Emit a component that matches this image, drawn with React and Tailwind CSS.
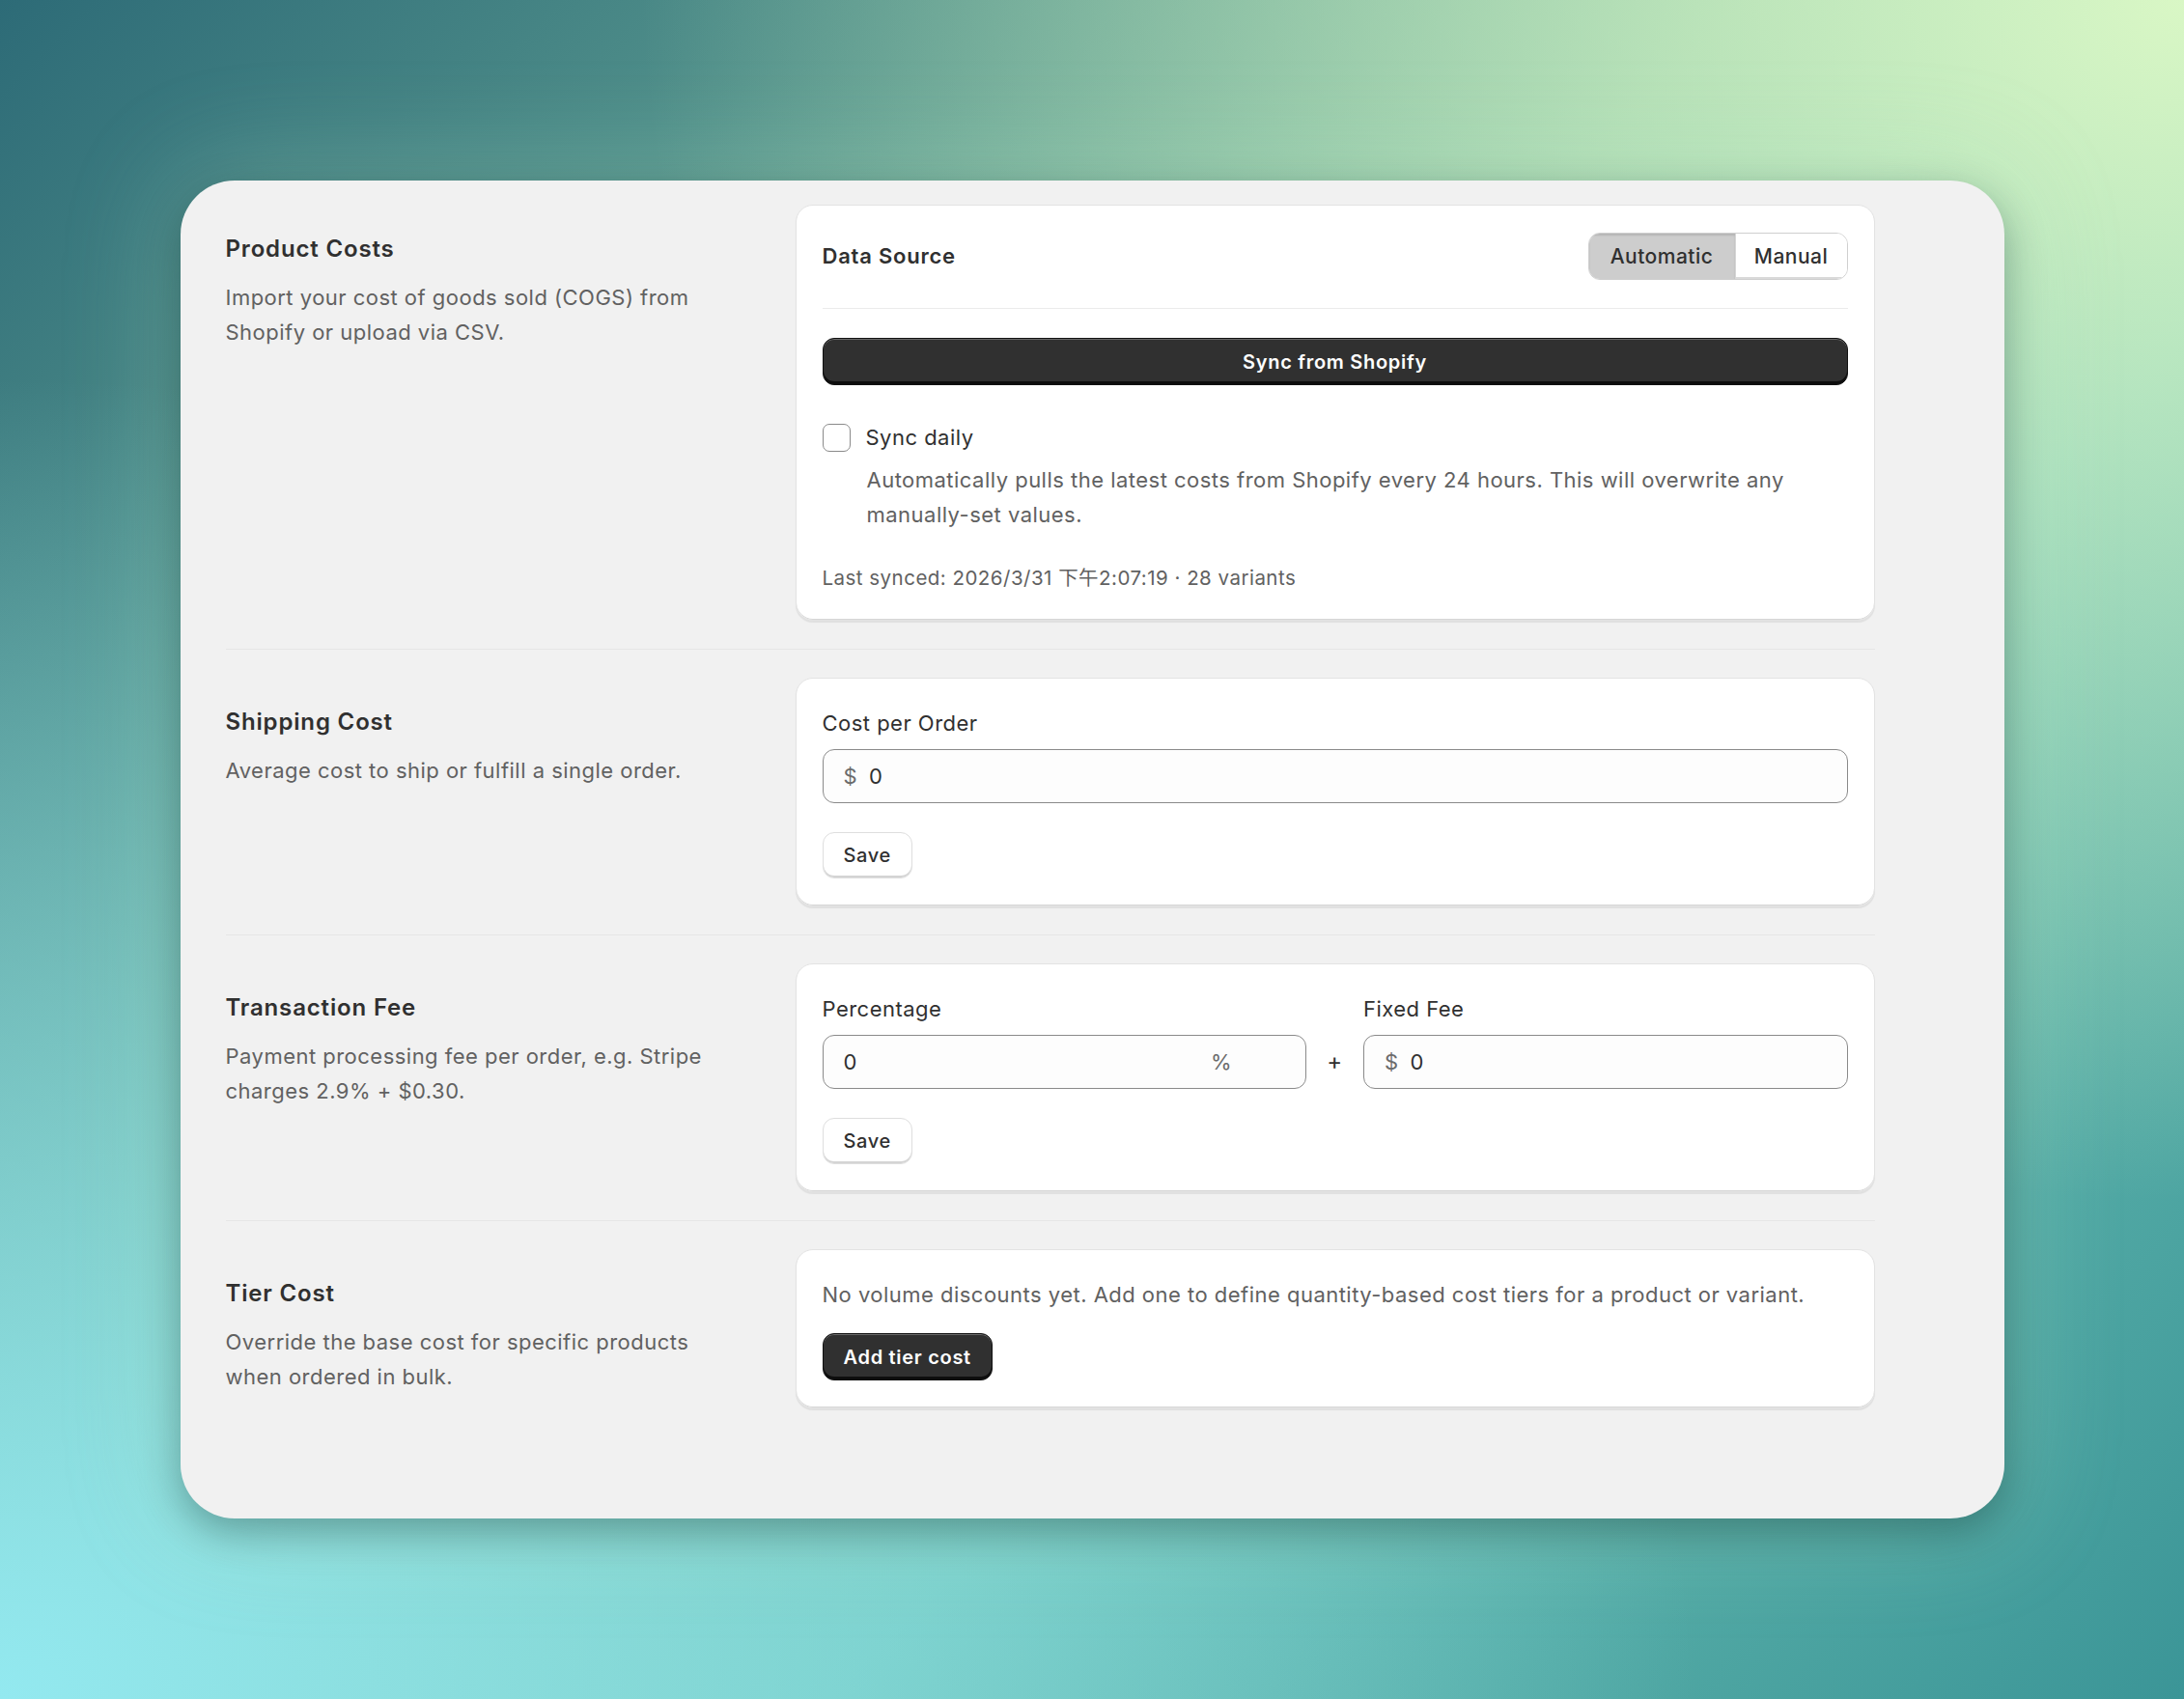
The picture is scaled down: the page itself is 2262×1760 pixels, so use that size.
import React from 'react';

function SectionText({ title, children }) {
  return (
    <div className="w-[590px] shrink-0 pt-[30px]">
      <h2 className="text-[24px] leading-[32px] font-semibold tracking-[0.035em] text-[#303030]">{title}</h2>
      <p className="mt-[16px] max-w-[530px] text-[22px] leading-[36px] text-[#616161]">{children}</p>
    </div>
  );
}

function Card({ children }) {
  return (
    <div className="w-[1118px] rounded-[18px] border border-[#e3e3e3] bg-white px-[27px] py-[28px] shadow-[0_2px_1px_rgba(0,0,0,0.07),inset_0_-1px_0_#d6d6d6]">
      {children}
    </div>
  );
}

function SecondaryButton({ children }) {
  return (
    <button className="h-[48px] rounded-[12px] border border-[#dedede] bg-white px-[21px] text-[20px] font-medium tracking-[0.03em] text-[#303030] shadow-[inset_0_-2px_0_#d4d4d4]">
      {children}
    </button>
  );
}

function PrimaryButton({ children, className = '' }) {
  return (
    <button
      className={`h-[49px] rounded-[12px] border border-[#111] bg-[#303030] px-[21px] text-[20px] font-semibold tracking-[0.035em] text-white shadow-[inset_0_1px_0_rgba(255,255,255,0.28),inset_0_-3px_0_#0d0d0d] ${className}`}
    >
      {children}
    </button>
  );
}

function MoneyInput() {
  return (
    <div className="flex h-[56px] items-center rounded-[12px] border border-[#8a8a8a] bg-[#fdfdfd] px-[21px] text-[22px]">
      <span className="text-[#6b6b6b]">$</span>
      <span className="ml-[12px] text-[#303030]">0</span>
    </div>
  );
}

export default function App() {
  return (
    <div className="flex h-[1760px] w-full items-center justify-center overflow-hidden bg-[image:radial-gradient(ellipse_at_100%_0%,#d9f7c5_0%,rgba(217,247,197,0)_50%),radial-gradient(ellipse_at_0%_100%,#93e9f0_0%,rgba(147,233,240,0)_55%),linear-gradient(135deg,#2d6b77_0%,#78b9a0_45%,#6cc0b4_65%,#3b9597_100%)] font-['Inter','Noto_Sans_CJK_SC',sans-serif] tracking-[0.03em]">
      {/* Settings panel */}
      <div className="w-[1889px] rounded-[56px] bg-[#f1f1f1] pb-[114px] pl-[47px] pt-[25px] shadow-[0_14px_40px_rgba(0,40,40,0.35),0_0_110px_10px_rgba(175,225,195,0.28)]">
        <div className="w-[1708px]">
          {/* Product costs */}
          <div className="flex border-b border-[#e6e6e6] pb-[29px]">
            <SectionText title="Product Costs">
              Import your cost of goods sold (COGS) from Shopify or upload via CSV.
            </SectionText>
            <Card>
              <div className="flex items-center justify-between border-b border-[#ebebeb] pb-[29px]">
                <h3 className="text-[22px] font-semibold tracking-[0.035em] text-[#303030]">Data Source</h3>
                <div className="flex h-[49px] overflow-hidden rounded-[12px] border border-[#cfcfcf] text-[21px] font-medium text-[#303030]">
                  <button className="w-[151px] bg-[#cdcdcd] shadow-[inset_0_2px_2px_rgba(0,0,0,0.12)]">Automatic</button>
                  <button className="w-[116px] border-l border-[#d6d6d6] bg-white shadow-[inset_0_-2px_0_#d9d9d9]">Manual</button>
                </div>
              </div>
              <PrimaryButton className="mt-[30px] w-full">Sync from Shopify</PrimaryButton>
              <div className="mt-[36px] flex items-center gap-[16px]">
                <span className="h-[29px] w-[29px] rounded-[7px] border-[1.5px] border-[#8a8a8a] bg-white" />
                <span className="text-[22px] leading-[36px] text-[#303030]">Sync daily</span>
              </div>
              <p className="ml-[46px] mt-[8px] text-[22px] leading-[36px] text-[#616161]">
                Automatically pulls the latest costs from Shopify every 24 hours. This will overwrite any manually-set values.
              </p>
              <p className="mt-[33px] text-[20.5px] leading-[30px] text-[#616161]">
                Last synced: 2026/3/31 下午2:07:19 · 28 variants
              </p>
            </Card>
          </div>

          {/* Shipping cost */}
          <div className="flex border-b border-[#e6e6e6] py-[29px]">
            <SectionText title="Shipping Cost">Average cost to ship or fulfill a single order.</SectionText>
            <Card>
              <label className="block text-[22px] leading-[36px] text-[#303030]">Cost per Order</label>
              <div className="mt-[9px]">
                <MoneyInput />
              </div>
              <div className="mt-[30px]">
                <SecondaryButton>Save</SecondaryButton>
              </div>
            </Card>
          </div>

          {/* Transaction fee */}
          <div className="flex border-b border-[#e6e6e6] py-[29px]">
            <SectionText title="Transaction Fee">
              Payment processing fee per order, e.g. Stripe charges 2.9% + $0.30.
            </SectionText>
            <Card>
              <div className="flex items-end">
                <div className="flex-1">
                  <label className="block text-[22px] leading-[36px] text-[#303030]">Percentage</label>
                  <div className="mt-[9px] flex h-[56px] items-center justify-between rounded-[12px] border border-[#8a8a8a] bg-[#fdfdfd] pl-[21px] pr-[76px] text-[22px]">
                    <span className="text-[#303030]">0</span>
                    <span className="text-[#6b6b6b]">%</span>
                  </div>
                </div>
                <div className="flex h-[56px] w-[59px] items-center justify-center text-[24px] text-[#303030]">+</div>
                <div className="flex-1">
                  <label className="block text-[22px] leading-[36px] text-[#303030]">Fixed Fee</label>
                  <div className="mt-[9px]">
                    <MoneyInput />
                  </div>
                </div>
              </div>
              <div className="mt-[30px]">
                <SecondaryButton>Save</SecondaryButton>
              </div>
            </Card>
          </div>

          {/* Tier cost */}
          <div className="flex pt-[29px]">
            <SectionText title="Tier Cost">Override the base cost for specific products when ordered in bulk.</SectionText>
            <Card>
              <p className="text-[22px] leading-[36px] text-[#616161]">
                No volume discounts yet. Add one to define quantity-based cost tiers for a product or variant.
              </p>
              <PrimaryButton className="mt-[22px]">Add tier cost</PrimaryButton>
            </Card>
          </div>
        </div>
      </div>
    </div>
  );
}
